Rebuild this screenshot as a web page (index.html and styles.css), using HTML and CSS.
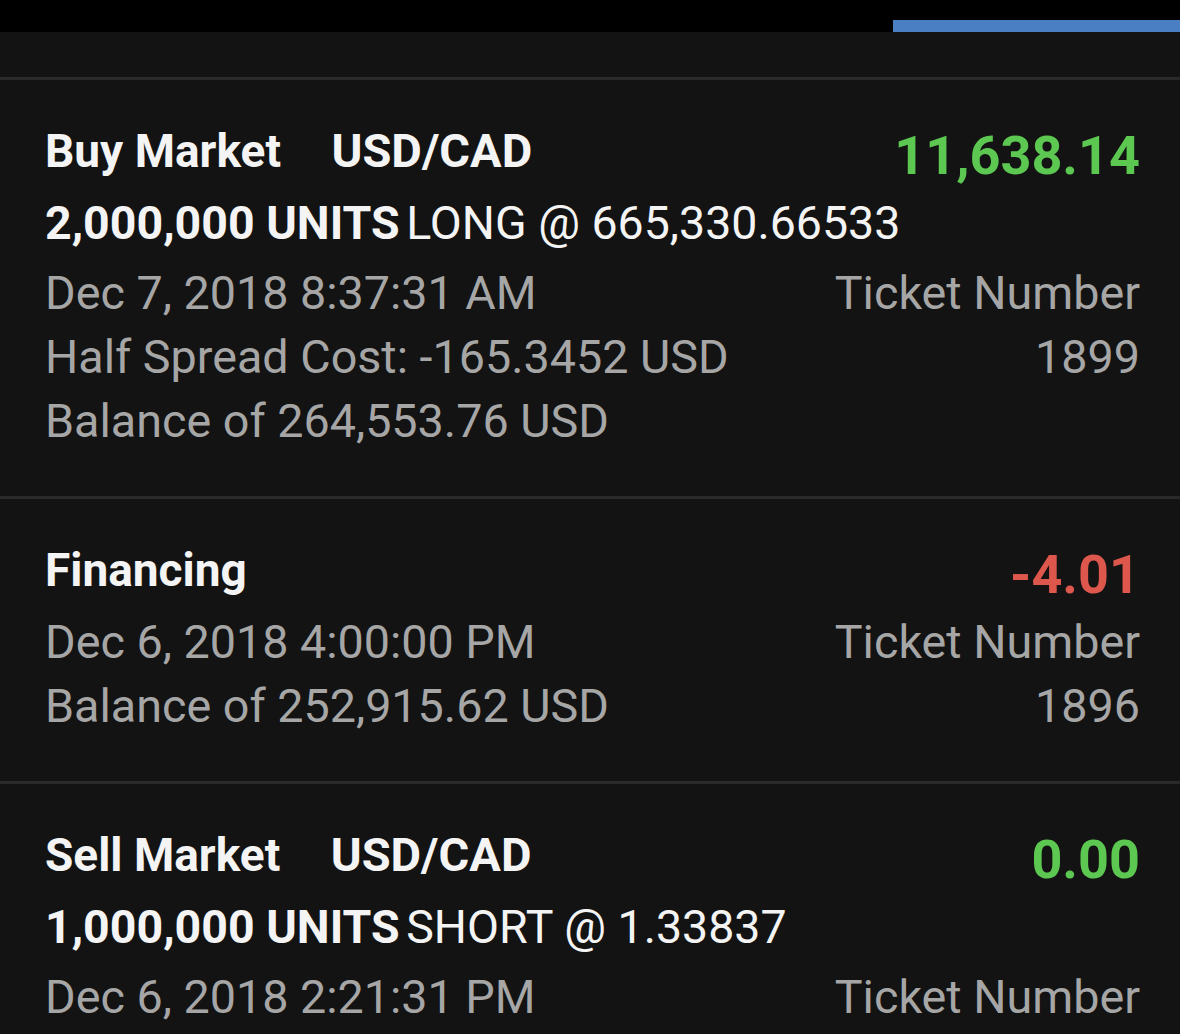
FILE: index.html
```html
<!DOCTYPE html>
<html lang="en">
<head>
<meta charset="utf-8">
<title>Transactions</title>
<link rel="stylesheet" href="styles.css">
</head>
<body>
<div class="app">
  <header class="topbar">
    <div class="tab-indicator"></div>
  </header>
  <div class="subbar"></div>

  <section class="txn">
    <div class="title">Buy Market <span class="pair">USD/CAD</span></div>
    <div class="amount positive">11,638.14</div>
    <div class="units wide"><b>2,000,000 UNITS</b> <span class="side">LONG @ 665,330.66533</span></div>
    <div class="meta">Dec 7, 2018 8:37:31 AM</div>
    <div class="meta right">Ticket Number</div>
    <div class="meta">Half Spread Cost: -165.3452 USD</div>
    <div class="meta right">1899</div>
    <div class="meta wide">Balance of 264,553.76 USD</div>
  </section>

  <section class="txn">
    <div class="title">Financing</div>
    <div class="amount negative">-4.01</div>
    <div class="meta">Dec 6, 2018 4:00:00 PM</div>
    <div class="meta right">Ticket Number</div>
    <div class="meta">Balance of 252,915.62 USD</div>
    <div class="meta right">1896</div>
  </section>

  <section class="txn">
    <div class="title">Sell Market <span class="pair">USD/CAD</span></div>
    <div class="amount positive">0.00</div>
    <div class="units wide"><b>1,000,000 UNITS</b> <span class="side">SHORT @ 1.33837</span></div>
    <div class="meta">Dec 6, 2018 2:21:31 PM</div>
    <div class="meta right">Ticket Number</div>
  </section>
</div>
</body>
</html>
```

FILE: styles.css
```css
html, body {
  margin: 0;
  padding: 0;
  background: #131313;
}

body {
  font-family: Roboto, "Liberation Sans", Arial, sans-serif;
  color: #f2f2f2;
  overflow: hidden;
}

.app {
  width: 1180px;
  height: 1034px;
  overflow: hidden;
  background: #131313;
}

.topbar {
  height: 32px;
  background: #000;
  display: flex;
  justify-content: flex-end;
  align-items: flex-end;
}

.tab-indicator {
  width: 287px;
  height: 12px;
  background: #4a7fc4;
}

.subbar {
  height: 45px;
  border-bottom: 3px solid #2a2a2a;
}

.txn {
  display: grid;
  grid-template-columns: 1fr auto;
  padding: 39px 40px 43px 45px;
  border-bottom: 3px solid #2a2a2a;
}

.title {
  font-size: 46px;
  font-weight: 700;
  line-height: 64px;
  margin-bottom: 8px;
  color: #f4f4f4;
  white-space: nowrap;
}

.pair {
  margin-left: 39px;
  font-size: 47px;
}

.amount {
  font-size: 54px;
  font-weight: 700;
  line-height: 64px;
  padding-top: 5px;
  text-align: right;
  white-space: nowrap;
}

.positive {
  color: #5cc751;
}

.negative {
  color: #de574c;
}

.units {
  font-size: 46.5px;
  line-height: 64px;
  margin-bottom: 6px;
  color: #f4f4f4;
  white-space: nowrap;
}

.units b {
  font-weight: 700;
}

.side {
  margin-left: -5px;
}

.wide {
  grid-column: 1 / -1;
}

.meta {
  font-size: 46.7px;
  line-height: 64px;
  color: #a6a6a6;
  white-space: nowrap;
}

.right {
  text-align: right;
}
```
